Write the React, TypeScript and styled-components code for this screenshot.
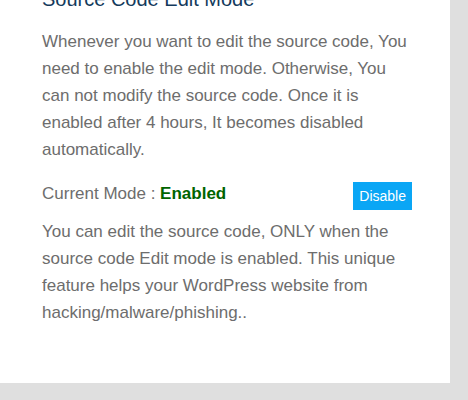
import React from 'react'
import styled, { createGlobalStyle } from 'styled-components'

const GlobalStyle = createGlobalStyle`
  html, body {
    margin: 0;
    padding: 0;
    background: #dfdfdf;
    overflow: hidden;
  }
  body {
    font-family: 'Liberation Sans', Arial, sans-serif;
  }
`

const Page = styled.div`
  width: 468px;
  height: 400px;
  overflow: hidden;
  background: #dfdfdf;
`

const Panel = styled.section`
  width: 450px;
  box-sizing: border-box;
  margin-top: -16px;
  padding: 0 38px 57px 42px;
  background: #ffffff;
`

const Title = styled.h2`
  margin: 0;
  font-size: 20px;
  font-weight: 400;
  line-height: 30px;
  color: #143a5c;
`

const Paragraph = styled.p<{ $top: number }>`
  margin: ${({ $top }) => $top}px 0 0;
  font-size: 17px;
  line-height: 27px;
  color: #6d6d6d;
`

const ModeRow = styled.div`
  display: flex;
  align-items: flex-start;
  justify-content: space-between;
  margin-top: 17px;
`

const ModeLabel = styled.span`
  font-size: 17px;
  line-height: 27px;
  color: #6d6d6d;
`

const ModeValue = styled.strong`
  color: #006400;
  font-weight: 700;
`

const ActionButton = styled.button`
  height: 28px;
  margin-top: 2px;
  padding: 0 6px;
  border: 0;
  border-radius: 0;
  background: #0aa6f5;
  color: #ffffff;
  font-family: 'Liberation Sans', Arial, sans-serif;
  font-size: 14px;
  cursor: pointer;
`

const SourceEditMode: React.FC = () => {
  return (
    <Panel>
      <Title>Source Code Edit Mode</Title>
      <Paragraph $top={14}>
        Whenever you want to edit the source code, You need to enable the edit mode. Otherwise, You can not modify the
        source code. Once it is enabled after 4 hours, It becomes disabled automatically.
      </Paragraph>
      <ModeRow>
        <ModeLabel>
          Current Mode : <ModeValue>Enabled</ModeValue>
        </ModeLabel>
        <ActionButton>Disable</ActionButton>
      </ModeRow>
      <Paragraph $top={8}>
        You can edit the source code, ONLY when the source code Edit mode is enabled. This unique feature helps your
        WordPress website from hacking/malware/phishing..
      </Paragraph>
    </Panel>
  )
}

const App: React.FC = () => (
  <Page>
    <GlobalStyle />
    <SourceEditMode />
  </Page>
)

export default App
